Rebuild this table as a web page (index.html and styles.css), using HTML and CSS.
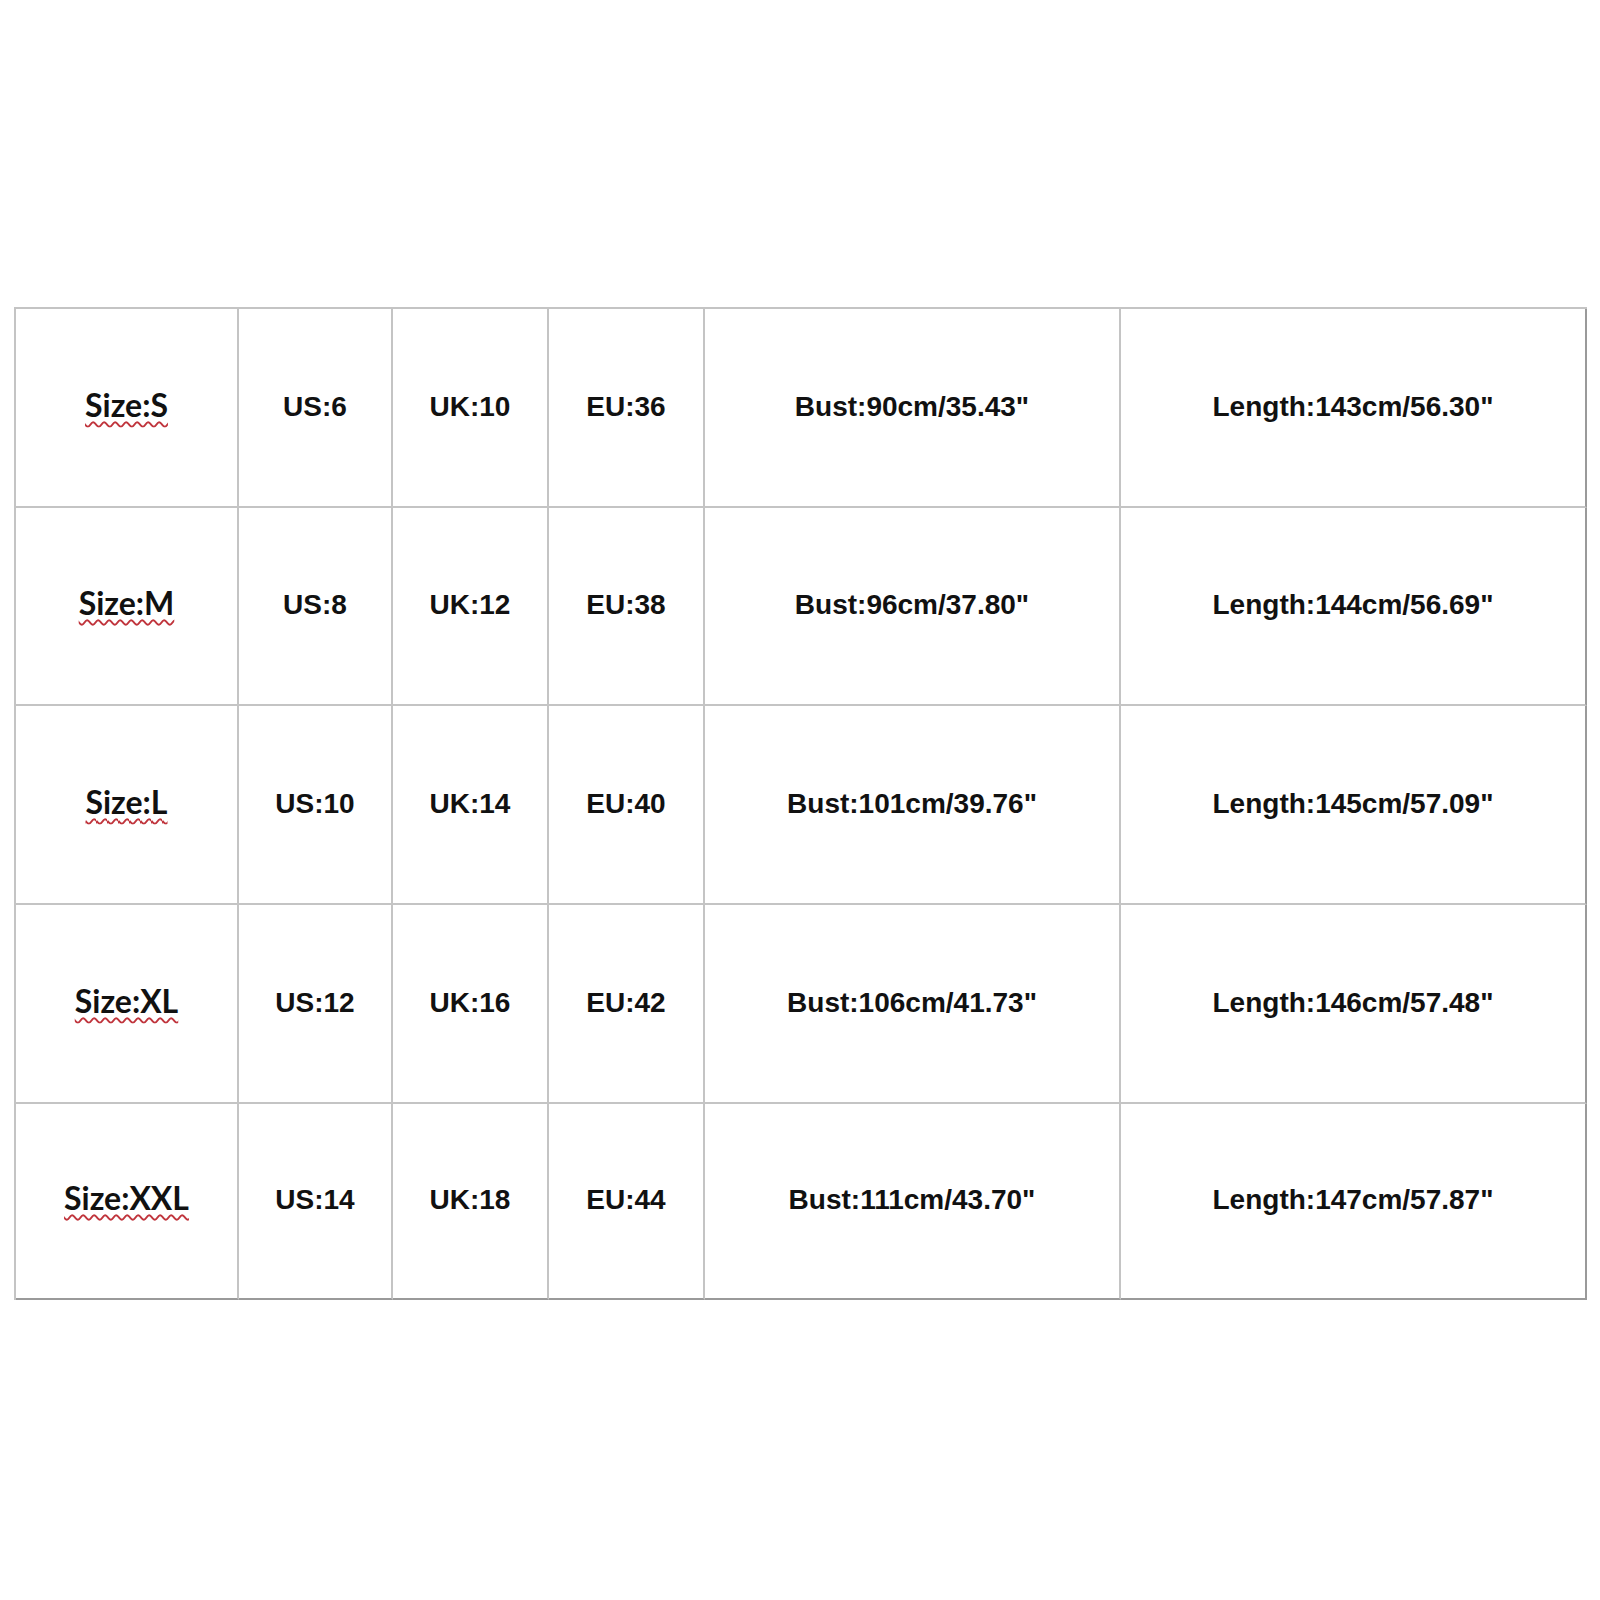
FILE: index.html
```html
<!DOCTYPE html>
<html lang="en">
<head>
<meta charset="utf-8">
<title>Size Chart</title>
<link rel="stylesheet" href="styles.css">
</head>
<body>
<div class="chart">
  <div class="cell size"><span class="spell">Size:S</span></div>
  <div class="cell">US:6</div>
  <div class="cell">UK:10</div>
  <div class="cell">EU:36</div>
  <div class="cell">Bust:90cm/35.43"</div>
  <div class="cell">Length:143cm/56.30"</div>

  <div class="cell size"><span class="spell">Size:M</span></div>
  <div class="cell">US:8</div>
  <div class="cell">UK:12</div>
  <div class="cell">EU:38</div>
  <div class="cell">Bust:96cm/37.80"</div>
  <div class="cell">Length:144cm/56.69"</div>

  <div class="cell size"><span class="spell">Size:L</span></div>
  <div class="cell">US:10</div>
  <div class="cell">UK:14</div>
  <div class="cell">EU:40</div>
  <div class="cell">Bust:101cm/39.76"</div>
  <div class="cell">Length:145cm/57.09"</div>

  <div class="cell size"><span class="spell">Size:XL</span></div>
  <div class="cell">US:12</div>
  <div class="cell">UK:16</div>
  <div class="cell">EU:42</div>
  <div class="cell">Bust:106cm/41.73"</div>
  <div class="cell">Length:146cm/57.48"</div>

  <div class="cell size"><span class="spell">Size:XXL</span></div>
  <div class="cell">US:14</div>
  <div class="cell">UK:18</div>
  <div class="cell">EU:44</div>
  <div class="cell">Bust:111cm/43.70"</div>
  <div class="cell">Length:147cm/57.87"</div>
</div>
</body>
</html>
```
FILE: styles.css
```css
html, body {
  margin: 0;
  padding: 0;
  background: #ffffff;
}

body {
  width: 1600px;
  height: 1600px;
  font-family: "Liberation Sans", Arial, sans-serif;
  color: #111111;
}

.chart {
  margin: 307px 0 0 14px;
  width: 1573px;
  display: grid;
  grid-template-columns: 223px 154px 156px 156px 416px 466px;
  grid-template-rows: 199px 198px 199px 199px 196px;
  border-top: 2px solid #c4c4c4;
  border-left: 2px solid #c4c4c4;
  box-sizing: border-box;
}

.cell {
  display: flex;
  align-items: center;
  justify-content: center;
  border-right: 2px solid #c4c4c4;
  border-bottom: 2px solid #c4c4c4;
  font-size: 28px;
  font-weight: bold;
  white-space: nowrap;
  padding-bottom: 2px;
  box-sizing: border-box;
}

.cell:nth-child(6n) {
  border-right-color: #9a9a9a;
}

.cell:nth-last-child(-n+6) {
  border-bottom-color: #9a9a9a;
}

.size {
  font-family: Lato, "Open Sans", sans-serif;
  font-size: 32px;
  padding-bottom: 7px;
}

.spell {
  text-decoration: underline wavy #c0343c;
  text-decoration-thickness: 1.5px;
  text-underline-offset: 4px;
}
```
